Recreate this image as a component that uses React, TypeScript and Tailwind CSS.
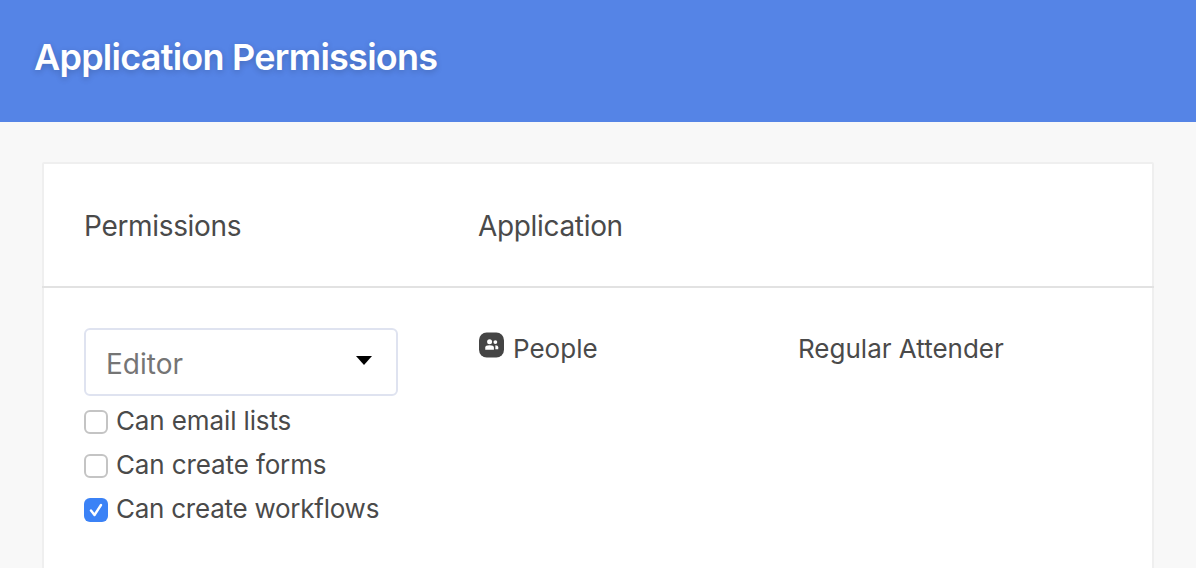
const App = () => {
  return (
    <div className="h-[568px] overflow-hidden bg-[#f8f8f8] text-[#4a4a4a] font-['Inter','Liberation_Sans',sans-serif]">
      <header className="flex h-[122px] items-center bg-[#5584e6] pb-[8px] pl-[34px]">
        <h1 className="text-[36px] font-semibold leading-none tracking-[-0.75px] text-white [text-shadow:0_2px_6px_rgba(0,0,0,0.2)]">
          Application Permissions
        </h1>
      </header>

      <main className="mx-[42px] mt-[40px] h-[500px] rounded-[2px] border-2 border-[#efefef] bg-white">
        <div className="-mx-[2px] flex h-[124px] items-center border-b-2 border-[#e2e2e2] pl-[42px] pt-[2px] text-[28px] tracking-[-0.33px]">
          <div className="w-[394px]">Permissions</div>
          <div>Application</div>
        </div>

        <div className="flex pl-[40px] pt-[39px] text-[26px] leading-[44px]">
          <div className="w-[394px] pt-[1px]">
            <div className="flex h-[68px] w-[314px] items-center justify-between rounded-[6px] border-2 border-[#dfe3f0] pl-[20px] pr-[24px] text-[28px] text-[#757575]">
              <span className="mt-[3px]">Editor</span>
              <svg width="16" height="9" viewBox="0 0 16 9" className="mt-[-3px]">
                <path d="M0 0H16L8 9Z" fill="#000000" />
              </svg>
            </div>
            <div className="mt-[3px] flex flex-col tracking-[-0.12px]">
              <label className="flex h-[44px] items-center gap-[8px]">
                <span className="mt-[2px] h-[24px] w-[24px] rounded-[6px] border-2 border-[#c4c4c4] bg-white" />
                Can email lists
              </label>
              <label className="flex h-[44px] items-center gap-[8px]">
                <span className="mt-[2px] h-[24px] w-[24px] rounded-[6px] border-2 border-[#c4c4c4] bg-white" />
                Can create forms
              </label>
              <label className="flex h-[44px] items-center gap-[8px] tracking-[-0.25px]">
                <span className="mt-[2px] flex h-[24px] w-[24px] items-center justify-center rounded-[6px] bg-[#3b82f6]">
                  <svg width="16" height="16" viewBox="0 0 16 16" fill="none">
                    <path d="M3 8.5L6.5 13L13 3" stroke="#ffffff" strokeWidth="2.4" strokeLinecap="round" strokeLinejoin="round" />
                  </svg>
                </span>
                Can create workflows
              </label>
            </div>
          </div>

          <div className="flex w-[320px] items-start gap-[9px] pl-[1px]">
            <svg width="25" height="26" viewBox="0 0 26 26" className="mt-[5px]">
              <rect width="26" height="26" rx="8" fill="#444444" />
              <circle cx="11" cy="9.5" r="2.6" fill="#ffffff" />
              <path d="M6.5 18V15.5C6.5 14 8 13.2 11 13.2C14 13.2 15.5 14 15.5 15.5V18Z" fill="#ffffff" />
              <circle cx="17" cy="10" r="2" fill="#ffffff" />
              <path d="M17 13.2C18.8 13.2 20 14 20 15.3V17.5H17Z" fill="#ffffff" />
            </svg>
            <span>People</span>
          </div>

          <div>Regular Attender</div>
        </div>
      </main>
    </div>
  );
};

export default App;
